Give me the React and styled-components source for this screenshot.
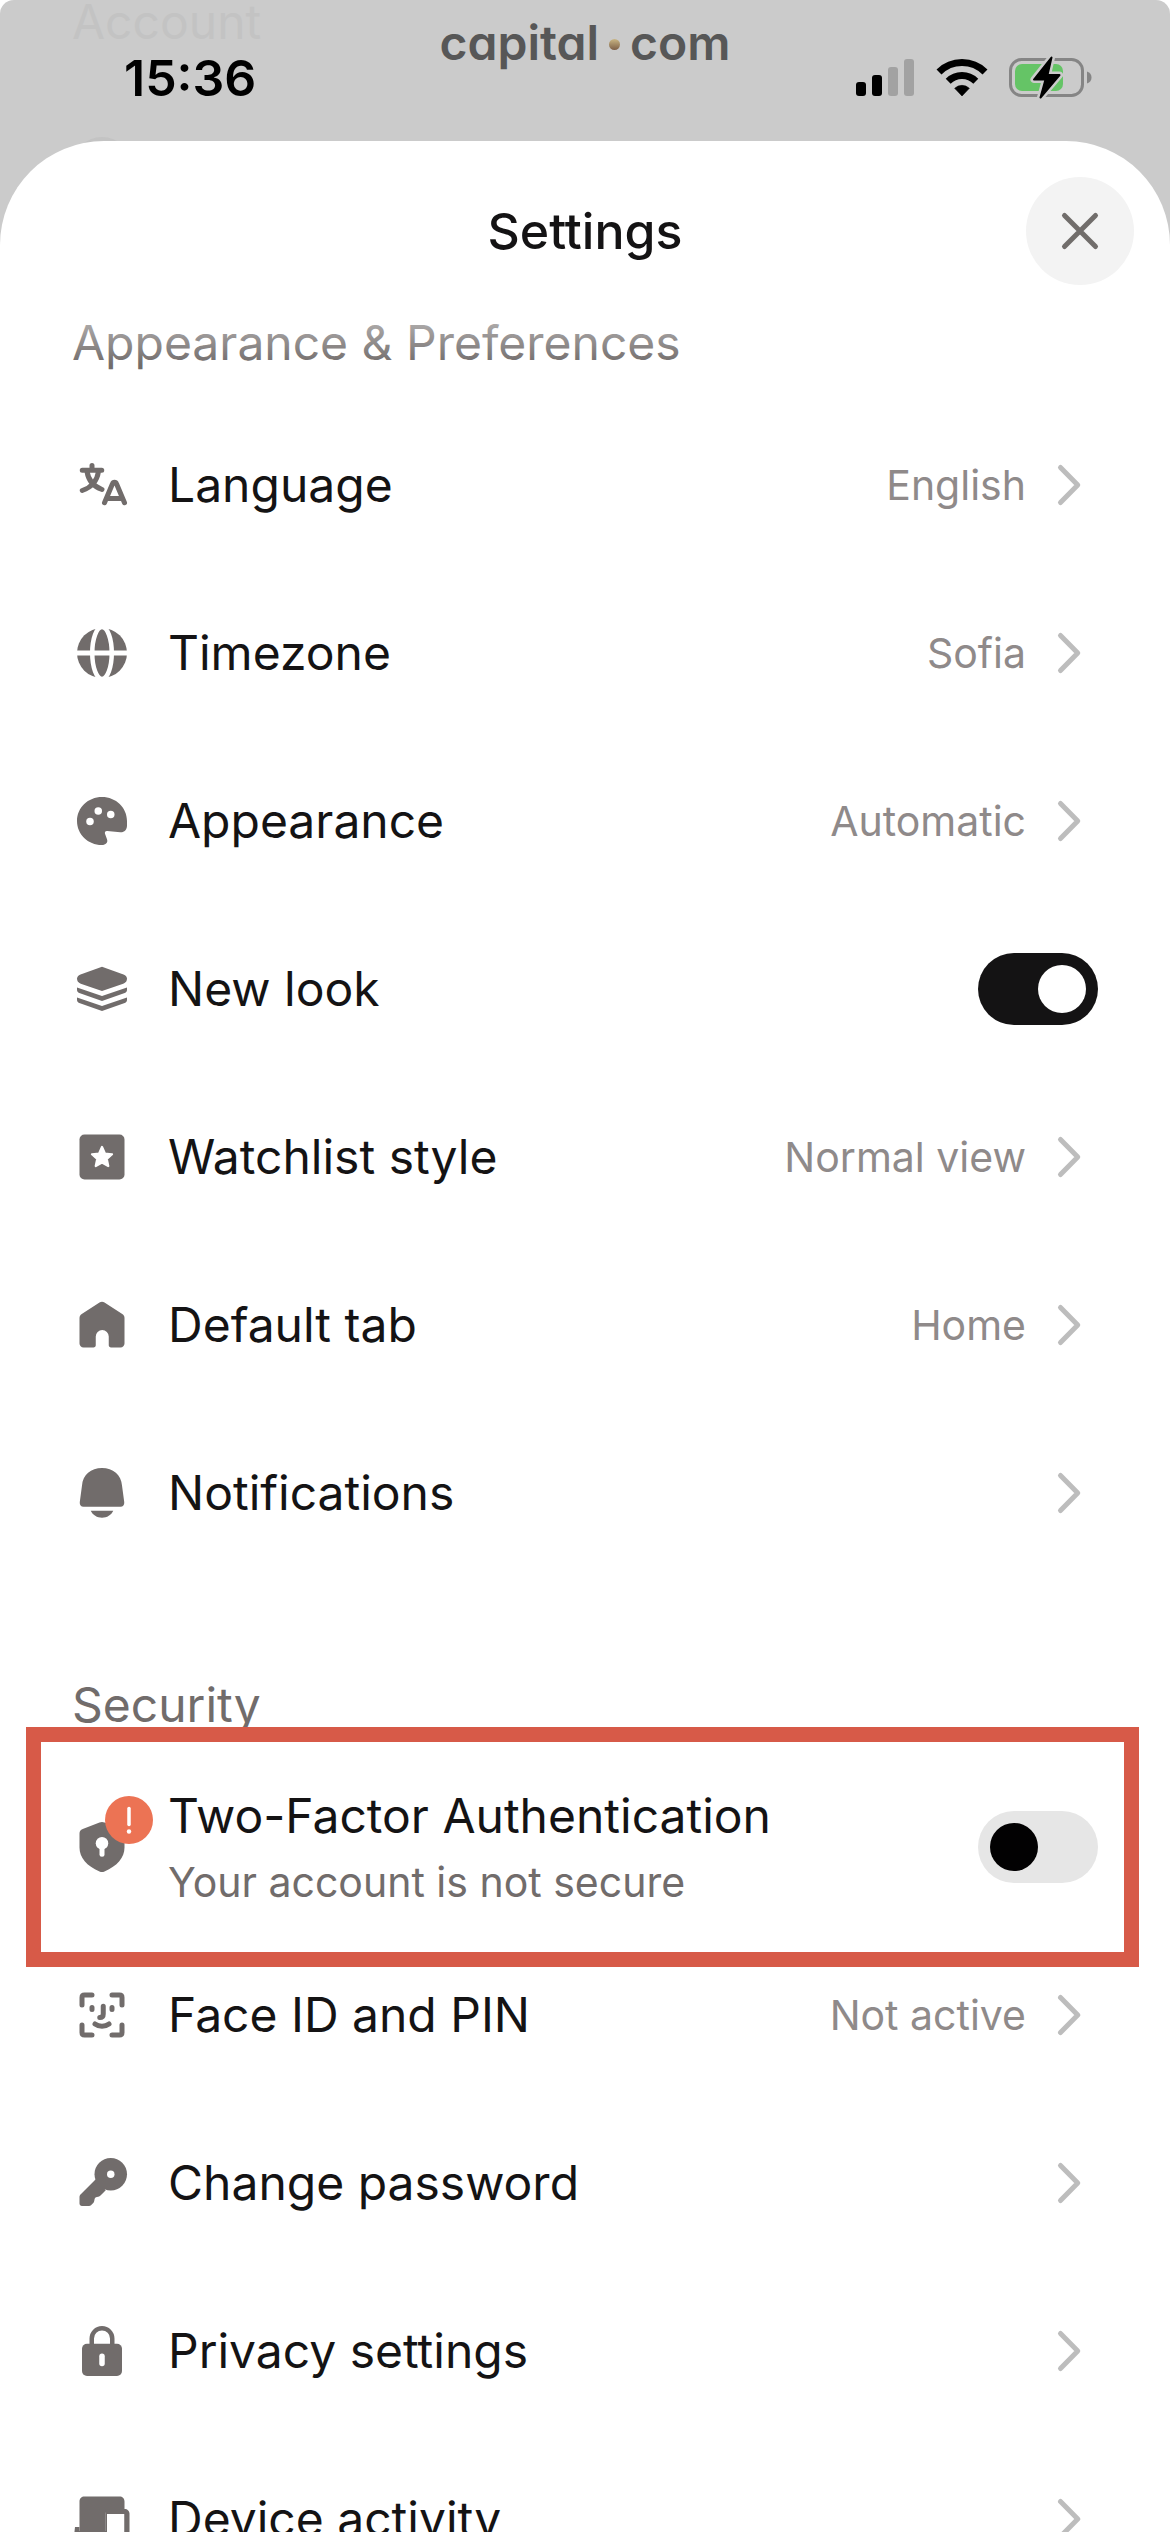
import React, { useState } from 'react';
import styled, { createGlobalStyle } from 'styled-components';

const GlobalStyle = createGlobalStyle`
  * {
    box-sizing: border-box;
  }

  body {
    margin: 0;
    background: #ffffff;
    font-family: Inter, 'Liberation Sans', sans-serif;
  }
`;

const Screen = styled.div`
  position: relative;
  display: flex;
  flex-direction: column;
  height: 100vh;
  overflow: hidden;
  border-radius: 14px 14px 0 0;
  background: #cbcbcb;
`;

// Dimmed page that stays behind the sheet
const Backdrop = styled.div`
  position: absolute;
  top: 0;
  left: 0;
  right: 0;
  padding: 0 72px;
  color: #c3c3c3;
  font-size: 48px;
  line-height: 44px;
`;

const BackdropDot = styled.div`
  width: 60px;
  height: 60px;
  margin-top: 93px;
  border-radius: 50%;
  background: #c3c3c3;
`;

const StatusBar = styled.header`
  position: relative;
  display: grid;
  grid-template-columns: 1fr auto 1fr;
  flex: none;
  height: 141px;
  padding: 0 78px;
`;

const Time = styled.span`
  padding: 48px 0 0 46px;
  color: #000000;
  font-size: 50px;
  font-weight: 600;
  line-height: 60px;
`;

const Brand = styled.span`
  display: flex;
  align-items: center;
  gap: 10px;
  height: 60px;
  margin-top: 12px;
  color: #575757;
  font-size: 48px;
  font-weight: 600;
  font-feature-settings: 'cv11';
`;

const BrandDot = styled.i`
  width: 11px;
  height: 11px;
  margin-top: 4px;
  border-radius: 50%;
  background: linear-gradient(#c9b583, #7d6048);
`;

const StatusIcons = styled.div`
  display: flex;
  justify-content: flex-end;
  gap: 20px;
  padding-top: 56px;

  svg {
    height: 44px;
  }
`;

const Sheet = styled.main`
  position: relative;
  display: flex;
  flex-direction: column;
  flex: 1;
  min-height: 0;
  overflow: hidden;
  border-radius: 104px 104px 0 0;
  background: #ffffff;
`;

const SheetHeader = styled.div`
  position: relative;
  z-index: 1;
  display: grid;
  grid-template-columns: 1fr auto 1fr;
  align-items: center;
  flex: none;
  padding: 36px 36px 0;

  &::after {
    content: '';
    position: absolute;
    top: 100%;
    left: 0;
    right: 0;
    height: 80px;
    background: linear-gradient(rgba(255, 255, 255, 0.8), rgba(255, 255, 255, 0));
    pointer-events: none;
  }
`;

const Title = styled.h1`
  grid-column: 2;
  margin: 0;
  color: #141314;
  font-size: 50px;
  font-weight: 500;
  line-height: 60px;
`;

const CloseButton = styled.button`
  display: grid;
  place-items: center;
  justify-self: end;
  width: 108px;
  height: 108px;
  padding: 0;
  border: none;
  border-radius: 50%;
  background: #f3f3f3;
  color: #716d6b;
  cursor: pointer;
`;

const Scroll = styled.div`
  flex: 1;
  min-height: 0;
  overflow-y: auto;
  scrollbar-width: none;
`;

const Section = styled.section`
  margin-bottom: 70px;
`;

const SectionTitle = styled.h2`
  margin: 0;
  padding: 0 72px;
  color: #716c6b;
  font-size: 48px;
  font-weight: 400;
  line-height: 116px;
`;

const Row = styled.div`
  position: relative;
  display: flex;
  align-items: center;
  width: 100%;
  height: 168px;
  padding: 0 72px;
  border: none;
  background: none;
  font-family: inherit;
  text-align: left;
  cursor: pointer;
`;

const Highlight = styled.span`
  position: absolute;
  inset: -36px 31px -36px 26px;
  z-index: 1;
  border: 15px solid #d75a48;
  pointer-events: none;
`;

const IconBox = styled.span`
  position: relative;
  flex: none;
  width: 60px;
  height: 60px;
  margin-right: 36px;
  color: #716c6b;
`;

const Badge = styled.span`
  position: absolute;
  top: -21px;
  left: 33px;
  width: 48px;
  height: 48px;
`;

const Texts = styled.span`
  display: flex;
  flex-direction: column;
  flex: 1;
  gap: 10px;
`;

const Label = styled.span`
  color: #141314;
  font-size: 48px;
  line-height: 60px;
`;

const Hint = styled.span`
  color: #716c6b;
  font-size: 41px;
  line-height: 52px;
`;

const Value = styled.span`
  margin-right: 12px;
  color: #8f8a8a;
  font-size: 41px;
  line-height: 52px;
`;

const Switch = styled.input`
  appearance: none;
  flex: none;
  width: 120px;
  height: 72px;
  margin: 0;
  padding: 12px;
  border-radius: 36px;
  background: #e6e6e6;
  cursor: pointer;

  &::before {
    content: '';
    display: block;
    width: 48px;
    height: 48px;
    border-radius: 50%;
    background: #020102;
  }

  &:checked {
    background: #141314;
  }

  &:checked::before {
    margin-left: auto;
    background: #ffffff;
  }
`;

const Icon = ({ children, size = 60 }) => (
  <svg width={size} height={size} viewBox="0 0 24 24" fill="currentColor" display="block" aria-hidden="true">
    {children}
  </svg>
);

const stroke = {
  fill: 'none',
  stroke: 'currentColor',
  strokeWidth: 2,
  strokeLinecap: 'round',
  strokeLinejoin: 'round',
};

const icons = {
  language: (
    <g {...stroke}>
      <path d="M8 4.2V6M4.1 6.1h7.8M6 6.6c.5 3.2 2.4 5.9 6 7.2M10.6 6.6C10.1 10 8 12.9 4.1 14.2" />
      <path d="M13 19.1l3.2-7.6c.3-.8 1.300-.8 1.600 0l3.200 7.600M14.400 17.400h5.200" />
    </g>
  ),
  timezone: (
    <>
      <circle cx="12" cy="12" r="10" />
      <ellipse cx="12" cy="12" rx="3.9" ry="10.4" fill="none" stroke="#fff" strokeWidth="1.8" />
      <path d="M1 12h22" stroke="#fff" strokeWidth="2" />
    </>
  ),
  appearance: (
    <>
      <path d="M12 2.4C6.4 2.4 2 6.7 2 12s4.4 9.6 9.9 9.6c1.6 0 2.6-1 2.1-2.3l-.8-2.2c-.2-.7.2-1.2.9-1.1l5.2.5c1.6.1 2.7-1 2.7-2.7V12c0-5.3-4.4-9.6-10-9.6z" />
      <g fill="#fff">
        <circle cx="10.5" cy="8" r="1.5" />
        <circle cx="15.5" cy="9.4" r="1.5" />
        <circle cx="7.2" cy="12.2" r="1.5" />
      </g>
    </>
  ),
  newLook: (
    <>
      <path d="M12 3.1l8.6 3.1c.9.4 1.4.9 1.4 1.7 0 .9-.5 1.6-1.5 2L12 12.8 3.5 9.9c-1-.4-1.5-1.1-1.5-2 0-.8.5-1.3 1.4-1.7z" />
      <path d="M2 11.4l10 3.4 10-3.4v1c0 .6-.4 1-1.2 1.3L12 16.8l-8.800-3.100C2.400 13.400 2 13 2 12.400z" />
      <path d="M2 15.4l10 3.4 10-3.4v1c0 .6-.4 1-1.2 1.3L12 20.8l-8.800-3.100C2.400 17.400 2 17 2 16.400z" />
    </>
  ),
  watchlist: (
    <>
      <rect x="3" y="3" width="18" height="18" rx="2" />
      <path
        d="M12 8l1.150 2.6 2.850.3-2.1 1.9.6 2.8-2.5-1.4-2.5 1.4.6-2.8L8 10.9l2.850-.3z"
        fill="#fff"
        stroke="#fff"
        strokeWidth=".9"
        strokeLinejoin="round"
      />
    </>
  ),
  home: (
    <path d="M11 3c.6-.4 1.400-.4 2 0l7.100 4.600c.6.4.9.9.9 1.600v10.200c0 .9-.7 1.600-1.600 1.600h-3.800c-.5 0-.9-.4-.9-.9v-3.500a2.600 2.600 0 0 0-5.200 0v3.500c0 .5-.4.9-.9.900H4.600C3.700 21 3 20.300 3 19.400V9.200c0-.7.3-1.200.9-1.600z" />
  ),
  bell: (
    <>
      <path d="M12 2C7.6 2 4.3 4.8 4 9l-.9 6.7c-.1 1.1.5 1.800 1.500 1.800h14.800c1 0 1.600-.7 1.500-1.800L20 9c-.3-4.200-3.600-7-8-7z" />
      <path d="M7.5 19.1h9c-.8 1.700-2.500 2.800-4.500 2.800s-3.700-1.100-4.500-2.800z" />
    </>
  ),
  shield: (
    <>
      <path d="M11 2.2c.7-.3 1.3-.3 2 0l6.700 2.600c.9.400 1.300.9 1.300 1.800v5.600c0 4-2.900 7.400-8 9.600-.7.300-1.300.3-2 0-5.100-2.200-8-5.600-8-9.600V6.600c0-.9.4-1.400 1.300-1.800z" />
      <circle cx="12" cy="10.5" r="2.5" fill="#fff" />
      <path d="M12 11v3.9" stroke="#fff" strokeWidth="2" strokeLinecap="round" />
    </>
  ),
  face: (
    <g {...stroke}>
      <path d="M4 8V5c0-.6.4-1 1-1h3M16 4h3c.6 0 1 .4 1 1v3M20 16v3c0 .6-.4 1-1 1h-3M8 20H5c-.6 0-1-.4-1-1v-3" />
      <path d="M8 9v.8M16 9v.8M12.5 8.5v3.1c0 .9-.5 1.4-1.4 1.4M9.2 15.6c1.6 1.2 4 1.2 5.6 0" />
    </g>
  ),
  key: (
    <>
      <path d="M9.500 10.500l-6 6c-.3.300-.5.700-.5 1.100v2.600c0 .6.400 1 1 1h2.800c.3 0 .6-.1.800-.3l.9-.9c.4-.4.400-.9.500-1.400.1-.6.400-.9 1-1 .7-.1 1-.2 1.500-.7l2-2z" />
      <circle cx="15.5" cy="8.5" r="6.5" />
      <circle cx="15.5" cy="8.5" r="1.5" fill="#fff" />
    </>
  ),
  lock: (
    <>
      <path d="M7.9 10V7a4.1 4.1 0 0 1 8.2 0v3" fill="none" stroke="currentColor" strokeWidth="1.8" />
      <rect x="4" y="9.1" width="16" height="12.9" rx="2" />
      <rect x="10.9" y="13" width="2.2" height="5.1" rx="1.1" fill="#fff" />
    </>
  ),
  devices: (
    <>
      <path d="M3 5c0-1.200.8-2 2-2h14c1.200 0 2 .8 2 2v3h-5.500c-1.400 0-2 .9-2 2v7H3z" />
      <path d="M1.200 15.200H3v1.600h11V20H4c-1.800 0-3-1.200-3-3z" />
      <path d="M13.500 8H21c1.200 0 2 .8 2 2v10c0 1.200-.8 2-2 2h-5.500c-1.200 0-2-.8-2-2z" />
      <path d="M14 10h6.900v10H14z" fill="#fff" />
    </>
  ),
};

const Chevron = () => (
  <svg width="60" height="60" viewBox="0 0 24 24" fill="none" stroke="#bdbdbd" strokeWidth="2" strokeLinecap="round" strokeLinejoin="round" aria-hidden="true">
    <path d="M9 5l6.9 7L9 19" />
  </svg>
);

const LinkRow = ({ icon, label, value }) => (
  <Row as="button" type="button">
    <IconBox>
      <Icon>{icons[icon]}</Icon>
    </IconBox>
    <Texts>
      <Label>{label}</Label>
    </Texts>
    {value && <Value>{value}</Value>}
    <Chevron />
  </Row>
);

const SwitchRow = ({ icon, label, hint, warning, checked, onChange }) => (
  <Row as="label">
    <IconBox>
      <Icon>{icons[icon]}</Icon>
      {warning && (
        <Badge>
          <svg width="48" height="48" viewBox="0 0 48 48" display="block" aria-hidden="true">
            <circle cx="24" cy="24" r="24" fill="#ec7354" />
            <path d="M24 12.5v16" stroke="#fff" strokeWidth="3.5" strokeLinecap="round" />
            <circle cx="24" cy="35.5" r="2.2" fill="#fff" />
          </svg>
        </Badge>
      )}
    </IconBox>
    <Texts>
      <Label>{label}</Label>
      {hint && <Hint>{hint}</Hint>}
    </Texts>
    <Switch type="checkbox" role="switch" checked={checked} onChange={onChange} />
    {warning && <Highlight />}
  </Row>
);

const App = () => {
  const [newLook, setNewLook] = useState(true);
  const [twoFactor, setTwoFactor] = useState(false);

  return (
    <Screen>
      <GlobalStyle />
      <Backdrop aria-hidden="true">
        Account
        <BackdropDot />
      </Backdrop>
      <StatusBar>
        <Time>15:36</Time>
        <Brand>
          capital
          <BrandDot />
          com
        </Brand>
        <StatusIcons>
          {/* Signal */}
          <svg width="60" viewBox="0 0 60 44" aria-hidden="true">
            <rect x="0" y="26" width="10" height="14" rx="3" />
            <rect x="16" y="19" width="10" height="21" rx="3" />
            <rect x="32" y="11" width="10" height="29" rx="3" fill="#a2a2a2" />
            <rect x="48" y="3" width="10" height="37" rx="3" fill="#a2a2a2" />
          </svg>
          {/* Wi-Fi */}
          <svg width="52" viewBox="0 0 52 44" aria-hidden="true">
            <path d="M26 40l-7.3-7.7a10.5 10.5 0 0 1 14.6 0z" strokeLinejoin="round" stroke="#000" strokeWidth=".6" />
            <path d="M12.2 25.3a19.6 19.6 0 0 1 27.6 0" fill="none" stroke="#000" strokeWidth="7" />
            <path d="M3 15.9a32.6 32.6 0 0 1 46 0" fill="none" stroke="#000" strokeWidth="7" />
          </svg>
          {/* Battery */}
          <svg width="84" viewBox="0 0 84 44" aria-hidden="true">
            <rect x="2.5" y="3.5" width="72" height="36" rx="11" fill="none" stroke="#858585" strokeWidth="3" />
            <path d="M79 15.5c3 1 4.5 3.2 4.5 6s-1.5 5-4.5 6z" fill="#858585" />
            <rect x="7" y="8" width="48" height="27" rx="7" fill="#65c466" />
            <path
              d="M43.5 1.5L26 23.5h11.5L32.5 41.5 51.5 19H39.5z"
              stroke="#cbcbcb"
              strokeWidth="7"
              strokeLinejoin="round"
            />
            <path d="M43.5 1.5L26 23.5h11.5L32.5 41.5 51.5 19H39.5z" stroke="#000" strokeWidth="2" strokeLinejoin="round" />
          </svg>
        </StatusIcons>
      </StatusBar>

      <Sheet>
        <SheetHeader>
          <Title>Settings</Title>
          <CloseButton type="button" aria-label="Close">
            <Icon size={60}>
              <path d="M5.8 5.8l12.4 12.4M18.2 5.8L5.8 18.2" {...stroke} />
            </Icon>
          </CloseButton>
        </SheetHeader>

        <Scroll>
          <Section>
            <SectionTitle>Appearance &amp; Preferences</SectionTitle>
            <LinkRow icon="language" label="Language" value="English" />
            <LinkRow icon="timezone" label="Timezone" value="Sofia" />
            <LinkRow icon="appearance" label="Appearance" value="Automatic" />
            <SwitchRow
              icon="newLook"
              label="New look"
              checked={newLook}
              onChange={() => setNewLook(!newLook)}
            />
            <LinkRow icon="watchlist" label="Watchlist style" value="Normal view" />
            <LinkRow icon="home" label="Default tab" value="Home" />
            <LinkRow icon="bell" label="Notifications" />
          </Section>

          <Section>
            <SectionTitle>Security</SectionTitle>
            <SwitchRow
              icon="shield"
              label="Two-Factor Authentication"
              hint="Your account is not secure"
              warning
              checked={twoFactor}
              onChange={() => setTwoFactor(!twoFactor)}
            />
            <LinkRow icon="face" label="Face ID and PIN" value="Not active" />
            <LinkRow icon="key" label="Change password" />
            <LinkRow icon="lock" label="Privacy settings" />
            <LinkRow icon="devices" label="Device activity" />
          </Section>
        </Scroll>
      </Sheet>
    </Screen>
  );
};

export default App;
